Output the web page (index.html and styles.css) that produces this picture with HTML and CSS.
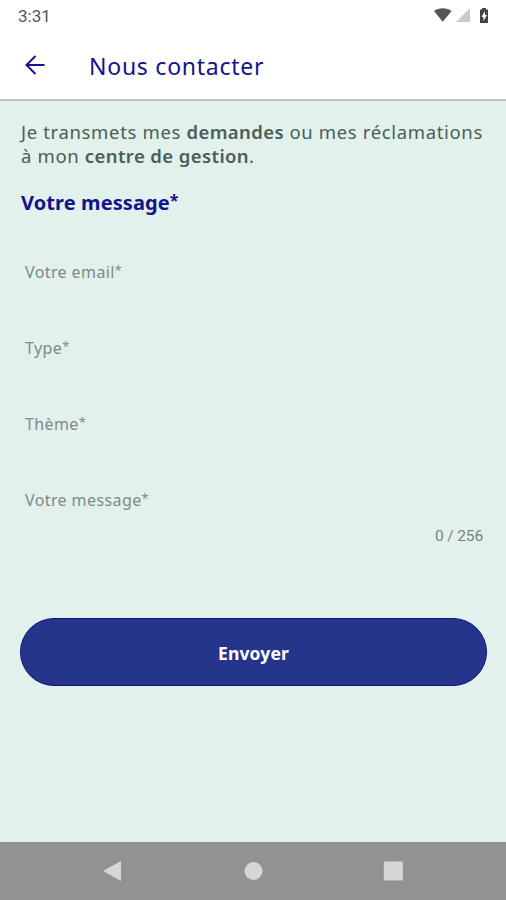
FILE: index.html
```html
<!DOCTYPE html>
<html lang="fr">
  <head>
    <meta charset="UTF-8" />
    <meta name="viewport" content="width=device-width, initial-scale=1.0" />
    <title>Nous contacter</title>
    <link rel="stylesheet" href="styles.css">
  </head>
  <body>
    <div class="screen">
      <header class="header">
        <div class="status-bar">
          <span class="time">3:31</span>
          <svg class="status-icons" width="58" height="18" viewBox="0 0 58 18">
            <path d="M1 3.6C6.500-.3 14.500-.3 20 3.600L10.500 15z" transform="translate(0 .6) scale(.93 .94)" fill="#555" />
            <path d="M37 1v14H23z" fill="#c9c9c9" />
            <path d="M49 1h4v1.500h2V16h-8V2.500h2z" fill="#444" />
            <path d="M52 4l-3.500 6h2v4l3.500-6h-2z" fill="#fff" />
          </svg>
        </div>
        <div class="app-bar">
          <a class="back" href="#" aria-label="Retour">
            <svg width="20" height="20" viewBox="0 0 20 20" fill="none" stroke="#13138a" stroke-width="2">
              <path d="M19.500 10H2M10.500 1L1.500 10l9 9" />
            </svg>
          </a>
          <h1 class="title">Nous contacter</h1>
        </div>
      </header>

      <main class="content">
        <p class="intro">Je transmets mes <b>demandes</b> ou mes réclamations<br>à mon <b>centre de gestion</b>.</p>
        <h2 class="subtitle">Votre message<span class="star">*</span></h2>

        <form class="form">
          <div class="field">Votre email<span class="star">*</span></div>
          <div class="field">Type<span class="star">*</span></div>
          <div class="field">Thème<span class="star">*</span></div>
          <div class="field">Votre message<span class="star">*</span></div>
          <div class="counter">0 / 256</div>
          <button class="send" type="button">Envoyer</button>
        </form>
      </main>

      <nav class="nav-bar">
        <svg width="20" height="22" viewBox="0 0 20 22"><path d="M0 11L18 1v20z" fill="#d5d6d5" /></svg>
        <svg width="20" height="22" viewBox="0 0 20 22"><circle cx="10.500" cy="11" r="9" fill="#d5d6d5" /></svg>
        <svg width="20" height="22" viewBox="0 0 20 22"><rect x=".8" y="1.500" width="19" height="19" rx="1" fill="#d5d6d5" /></svg>
      </nav>
    </div>
  </body>
</html>
```

FILE: styles.css
```css
* {
  box-sizing: border-box;
}

body {
  margin: 0;
  font-family: "Noto Sans", "Open Sans", sans-serif;
}

.screen {
  display: flex;
  flex-direction: column;
  height: 900px;
  background-color: #e2f1ec;
}

/* Header */
.header {
  height: 101px;
  background-color: #fff;
  border-bottom: 2px solid #bac6c2;
}

.status-bar {
  display: flex;
  justify-content: space-between;
  height: 32px;
  padding: 7px 15px 0 18px;
}

.time {
  font: 17px/18px Roboto, sans-serif;
  color: #555;
}

.app-bar {
  display: flex;
  align-items: center;
  height: 66px;
  padding-left: 25px;
}

.back {
  display: flex;
  width: 64px;
}

.title {
  margin: 2px 0 0;
  font-size: 23px;
  font-weight: 400;
  line-height: 30px;
  letter-spacing: 0.75px;
  color: #13138a;
}

/* Content */
.content {
  flex: 1;
  padding: 19px 19px 0 20px;
}

.intro {
  margin: 0 0 0 1px;
  font-size: 18.500px;
  line-height: 24px;
  letter-spacing: 0.65px;
  color: #4b5d58;
  white-space: nowrap;
}

.intro b {
  font-weight: 600;
  letter-spacing: 0.4px;
}

.subtitle {
  margin: 21px 0 0 1px;
  font-size: 20px;
  font-weight: 700;
  line-height: 28px;
  letter-spacing: 0.1px;
  color: #13138a;
}

.star {
  font-size: 0.8em;
  line-height: 1;
  vertical-align: 0.25em;
}

/* Form */
.form {
  padding-top: 32px;
}

.field {
  height: 38px;
  margin: 0 4px 38px 5px;
  padding-top: 11px;
  border-bottom: 1px solid #deeee9;
  font-size: 16px;
  line-height: 24px;
  letter-spacing: 0.4px;
  color: #7b8b86;
}

.counter {
  margin: -29px 4px 0 0;
  font: 15.500px/24px Roboto, sans-serif;
  letter-spacing: -0.15px;
  text-align: right;
  color: #75847f;
}

.send {
  display: block;
  width: 100%;
  height: 68px;
  margin-top: 70px;
  padding-top: 3px;
  border: 1px solid #11127d;
  border-radius: 34px;
  background-color: #26358c;
  font-family: inherit;
  font-size: 17.500px;
  font-weight: 700;
  letter-spacing: 0.15px;
  color: #fff;
}

/* Android navigation */
.nav-bar {
  display: flex;
  justify-content: space-between;
  align-items: center;
  height: 58px;
  padding: 0 103px;
  background-color: #919392;
}
```
